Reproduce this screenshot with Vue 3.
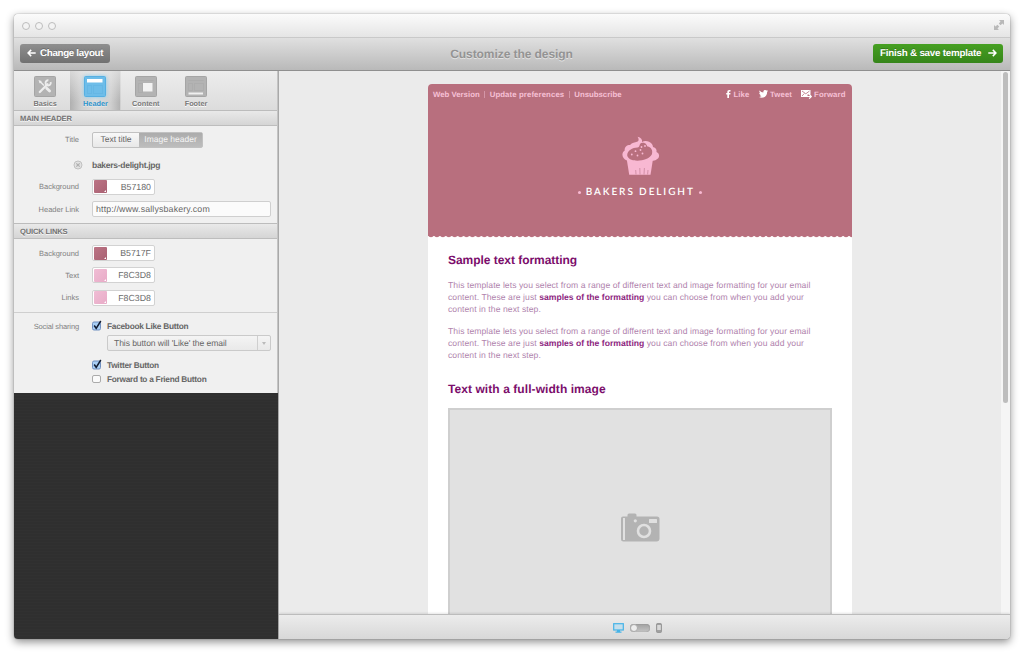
<script setup>
const tabs = [
  { id: 'basics', label: 'Basics' },
  { id: 'header', label: 'Header' },
  { id: 'content', label: 'Content' },
  { id: 'footer', label: 'Footer' },
]
const activeTab = 'header'
const quickLinks = [
  { label: 'Background', value: 'B5717F', tone: 'rose' },
  { label: 'Text', value: 'F8C3D8', tone: 'pink' },
  { label: 'Links', value: 'F8C3D8', tone: 'pink' },
]
const paragraphs = [1, 2]
</script>

<template>
  <div class="window">
    <div class="titlebar">
      <div class="lights"><i></i><i></i><i></i></div>
      <svg class="expand" width="10" height="10" viewBox="0 0 10 10"><path d="M5 0H10V5L8.500 3.500 6.500 5.200 4.800 3.500 6.500 1.500ZM0 5L1.500 6.500 3.400 4.800 5.200 6.600 3.500 8.500 5 10H0Z" fill="#b9b9b9" /></svg>
    </div>

    <div class="toolbar">
      <button class="btn back">
        <svg width="9" height="8" viewBox="0 0 9 8"><path d="M8.700 4H1.500M4.200 .9L1.100 4 4.200 7.100" fill="none" stroke="#fff" stroke-width="1.500" /></svg>
        <span>Change layout</span>
      </button>
      <h1>Customize the design</h1>
      <button class="btn save">
        <span>Finish &amp; save template</span>
        <svg width="9" height="8" viewBox="0 0 9 8"><path d="M.3 4H7.500M4.800 .9L7.900 4 4.800 7.100" fill="none" stroke="#fff" stroke-width="1.500" /></svg>
      </button>
    </div>

    <div class="body">
      <aside class="sidebar">
        <div class="panel">
          <nav class="tabs">
            <div v-for="tab in tabs" :key="tab.id" class="tab" :class="{ active: tab.id === activeTab }">
              <svg width="22" height="21" viewBox="0 0 22 21">
                <rect x=".5" y=".5" width="21" height="20" rx="1" :fill="tab.id === activeTab ? '#6dbde9' : '#b3b3b3'" :stroke="tab.id === activeTab ? '#56b0e3' : '#a5a5a5'" />
                <template v-if="tab.id === 'basics'">
                  <path d="M5.800 16L13.500 8.300" stroke="#ececec" stroke-width="2.300" stroke-linecap="round" />
                  <path d="M16.600 6A2.600 2.600 0 1 1 14.400 4.300" fill="none" stroke="#ececec" stroke-width="1.900" />
                  <path d="M6 5.500L10 9.500" stroke="#ececec" stroke-width="1.500" />
                  <path d="M4.500 4L7.500 5 7 7 5.500 7.200Z" fill="#ececec" />
                  <path d="M12.700 12.200L15.600 15.100" stroke="#ececec" stroke-width="2.800" stroke-linecap="round" />
                </template>
                <template v-else-if="tab.id === 'header'">
                  <path d="M3.500 9.500V17.500H7.500V9.500ZM9.500 9.500V17.500H18.500V9.500Z" fill="none" stroke="#60b3e2" stroke-width=".6" />
                  <rect x="3" y="3" width="15.500" height="3.500" fill="#fff" />
                </template>
                <template v-else-if="tab.id === 'content'">
                  <path d="M3.500 4.500H18.500M3.500 7.500H7.500V16.500H3.500Z" fill="none" stroke="#a9a9a9" stroke-width=".6" />
                  <rect x="8" y="7" width="9.500" height="8.500" fill="#f2f2f2" />
                </template>
                <template v-else>
                  <path d="M3.500 4.500H18.500M3.500 7.500H7.500V14.500H3.500ZM9.500 7.500H18.500V14.500H9.500Z" fill="none" stroke="#a9a9a9" stroke-width=".6" />
                  <rect x="3.500" y="16.500" width="14.500" height="2" fill="#f0f0f0" />
                </template>
              </svg>
              <span>{{ tab.label }}</span>
            </div>
          </nav>

          <h2 class="section">MAIN HEADER</h2>
          <div class="rows main-rows">
            <div class="row">
              <label>Title</label>
              <div class="segmented"><span>Text title</span><span class="on">Image header</span></div>
            </div>
            <div class="row file">
              <label>
                <svg width="10" height="10" viewBox="0 0 10 10"><circle cx="5" cy="5" r="4" fill="#e2e2e2" stroke="#c0c0c0" /><path d="M3.300 3.300L6.700 6.700M6.700 3.300L3.300 6.700" stroke="#b0b0b0" stroke-width="1.200" /></svg>
              </label>
              <b>bakers-delight.jpg</b>
            </div>
            <div class="row">
              <label>Background</label>
              <div class="color"><i class="rose"></i><span>B57180</span></div>
            </div>
            <div class="row">
              <label>Header Link</label>
              <div class="input"><span>http://www.sallysbakery.com</span></div>
            </div>
          </div>

          <h2 class="section second">QUICK LINKS</h2>
          <div class="rows quick-rows">
            <div v-for="item in quickLinks" :key="item.label" class="row">
              <label>{{ item.label }}</label>
              <div class="color"><i :class="item.tone"></i><span>{{ item.value }}</span></div>
            </div>
          </div>

          <div class="social">
            <label>Social sharing</label>
            <div class="options">
              <div class="check">
                <svg width="10" height="11" viewBox="0 0 10 11"><rect x=".5" y="2" width="8" height="8" rx="1.500" fill="#a9cff5" stroke="#6f8fc0" /><path d="M2.200 5.500L4.200 8.300 8.800 1" fill="none" stroke="#111d33" stroke-width="1.500" /></svg>
                <b>Facebook Like Button</b>
              </div>
              <div class="select"><span>This button will 'Like' the email</span><em></em></div>
              <div class="check twitter">
                <svg width="10" height="11" viewBox="0 0 10 11"><rect x=".5" y="2" width="8" height="8" rx="1.500" fill="#a9cff5" stroke="#6f8fc0" /><path d="M2.200 5.500L4.200 8.300 8.800 1" fill="none" stroke="#111d33" stroke-width="1.500" /></svg>
                <b>Twitter Button</b>
              </div>
              <div class="check">
                <svg width="10" height="11" viewBox="0 0 10 11"><rect x=".5" y="2.500" width="8" height="7" rx="1.500" fill="#fafafa" stroke="#ababab" /></svg>
                <b>Forward to a Friend Button</b>
              </div>
            </div>
          </div>
        </div>
      </aside>

      <main class="stage">
        <div class="viewport">
          <article class="email">
            <header class="banner">
              <div class="links">
                <span>Web Version</span><i></i><span class="prefs">Update preferences</span><i></i><span>Unsubscribe</span>
                <div class="share">
                  <svg width="5" height="8" viewBox="0 0 5 8"><path d="M1.300 8V4.400H.2V2.900H1.300V2C1.300.7 2 0 3.300 0H4.500V1.400H3.800C3.200 1.400 3 1.600 3 2.100V2.900H4.500L4.300 4.400H3V8Z" fill="#fff" /></svg>
                  <span>Like</span>
                  <svg class="bird" width="9" height="8" viewBox="0 0 9 8"><path d="M9 1C8.700 1.500 8.400 1.700 8.100 2 8.200 5.600 5.500 7.700 2.900 7.700 1.700 7.700.8 7.400 0 6.900 1 7 2 6.700 2.700 6.100 1.800 6.100 1.200 5.500 1 4.800H1.700C.8 4.500.3 3.800.3 2.900L1.100 3.100C.3 2.500.1 1.500.6.600 1.600 1.800 2.800 2.500 4.400 2.600 4 .8 5.200 0 6.200 0 6.800 0 7.300.2 7.600.6L8.800.2 8.200 1.200Z" fill="#fff" /></svg>
                  <span>Tweet</span>
                  <svg class="mail" width="11" height="9" viewBox="0 0 11 9"><path d="M0 0H9.500V4.500H6.500V7H0Z" fill="#fff" /><path d="M1 1L4.800 3.800 8.500 1M1 6L3.300 3.500" fill="none" stroke="#b86f7e" stroke-width=".8" /><path d="M6 6.500H9.500M8.200 4.200L10.300 6.500 8.200 8.600" fill="none" stroke="#fff" stroke-width="1.200" /></svg>
                  <span>Forward</span>
                </div>
              </div>
              <svg class="cupcake" width="38" height="40" viewBox="0 0 38 40">
                <g fill="#f8b8d2">
                  <path d="M5 24.500C2 23.500 .3 21 .4 18.500C.5 16.500 1.500 15.200 2.700 14.500C2.300 11 4.800 9 8 9C10 6.800 13 6.300 15 5.800C17.200 5 17 3 15.500 .8C19 1.300 20.500 3.600 20 6C22 4.600 25 4.600 27 5.800C29.500 7 31 9 31 11C34 11.800 35 14 34.500 16C38 17.500 38 22 34.500 23.500C33 24.600 31.500 24.800 30.500 24.800L19 29Z" />
                  <path d="M4.700 23H31L28.500 38.700H7.200Z" />
                </g>
                <path d="M5.200 19.500C5 14.500 10.500 11.500 15.500 11.500C18.500 11.500 16.500 7 20.500 6.800C24 6.600 24.500 9 25.500 10.500C29.500 11 31.200 15 29.800 18.500C26.500 25.500 7 27.500 5.200 19.500Z" fill="#b86f7e" />
                <g fill="#f8b8d2"><circle cx="9.800" cy="18.500" r=".9" /><circle cx="13.500" cy="15.200" r=".9" /><circle cx="15.500" cy="19.500" r=".9" /><circle cx="18.500" cy="14" r=".9" /><circle cx="20.500" cy="17.500" r=".9" /><circle cx="23" cy="10" r=".9" /><circle cx="19.500" cy="11" r=".9" /></g>
                <path d="M13.700 34L14 38.500M17.800 32L18 38.500M22.400 32L22 38.500M26 34L25.600 38.500" stroke="#cd8ba2" stroke-width=".9" />
              </svg>
              <div class="brand"><i></i><span>BAKERS DELIGHT</span><i></i></div>
            </header>
            <svg class="scallop" width="424" height="4" viewBox="0 0 424 4">
              <defs><pattern id="scallops" width="5.930" height="4" patternUnits="userSpaceOnUse"><path d="M0 0H5.930V1.200Q5.200 3.300 2.960 3.300Q.7 3.300 0 1.200Z" fill="#b86f7e" /></pattern></defs>
              <rect width="424" height="4" fill="url(#scallops)" />
            </svg>
            <section class="copy">
              <h3>Sample text formatting</h3>
              <p v-for="n in paragraphs" :key="n">
                <span class="line">This template lets you select from a range of different text and image formatting for your email</span>
                <span class="line">content. These are just <b>samples of the formatting</b> you can choose from when you add your</span>
                <span class="line">content in the next step.</span>
              </p>
              <h3 class="second-heading">Text with a full-width image</h3>
              <div class="photo">
                <svg width="40" height="30" viewBox="0 0 40 30">
                  <path d="M1 5.500Q1 3.500 3 3.500H7.500V2Q7.500.500 9 .5H15Q16.500.500 16.500 2V3.500H37Q39.500 3.500 39.500 6V25.500Q39.500 28.500 36.500 28.500H3.500Q1 28.500 1 26Z" fill="#b3b3b3" />
                  <rect x="3" y="5" width="2" height="22" fill="#e0e0e0" />
                  <circle cx="15.300" cy="7.800" r="1.600" fill="#e0e0e0" /><rect x="29" y="6" width="8" height="4" rx=".5" fill="#e0e0e0" />
                  <circle cx="24" cy="18" r="6" fill="#b3b3b3" stroke="#e0e0e0" stroke-width="2.600" />
                </svg>
              </div>
            </section>
          </article>
          <div class="track"><div class="thumb"></div></div>
        </div>
        <footer class="devices">
          <svg width="11" height="10" viewBox="0 0 11 10"><rect x=".7" y=".7" width="9.600" height="6.300" fill="#c5dfec" stroke="#45b3e7" stroke-width="1.200" /><path d="M4 7H7V8.500H8.500V9.700H2.500V8.500H4Z" fill="#45b3e7" /></svg>
          <div class="toggle"><i></i></div>
          <svg width="6" height="10" viewBox="0 0 6 10"><rect x=".6" y=".6" width="4.800" height="8.800" rx=".7" fill="#a2a2a2" stroke="#949494" /><rect x="1.200" y="2" width="3.600" height="5" fill="#d9d9d9" /></svg>
        </footer>
      </main>
    </div>
  </div>
</template>

<style>
html, body { margin: 0; background: #fff; overflow: hidden; }
</style>

<style scoped>
* { box-sizing: border-box; }
svg { flex: none; }
.window { width: 996px; height: 625px; margin: 14px; border-radius: 4px; overflow: hidden; display: flex; flex-direction: column; font-family: "Liberation Sans", Arial, sans-serif; text-rendering: geometricPrecision; background: #ebebeb; box-shadow: 0 0 1px rgba(0,0,0,.65), 0 3px 8px rgba(0,0,0,.45); }
span, b, label, h1, h2, h3 { white-space: nowrap; }
.titlebar { height: 24px; flex: none; display: flex; align-items: center; justify-content: space-between; padding: 1px 6.500px 0 8px; background: linear-gradient(#fbfbfb, #e5e5e5); border-bottom: 1px solid #c9c9c9; }
.lights { display: flex; gap: 5px; }
.lights i { width: 8px; height: 8px; border: 1px solid #bdbdbd; border-radius: 50%; background: #f3f3f3; }
.expand { margin-top: -2px; }
.toolbar { height: 33px; flex: none; display: flex; align-items: center; justify-content: space-between; padding: 0 7px 2px 6px; background: linear-gradient(#e0e0e0, #b9b9b9); border-bottom: 1px solid #8f8f8f; }
.toolbar h1 { margin: 2px -20px 0 20px; font-size: 12px; line-height: 14px; color: #939393; text-shadow: 0 1px #e4e4e4; letter-spacing: -.07px; }
.btn { border: 0; border-radius: 3px; height: 19px; font: bold 9.800px/12px "Liberation Sans", Arial, sans-serif; color: #fff; display: flex; align-items: center; text-shadow: 0 -1px rgba(0,0,0,.25); padding: 0 7px; text-rendering: geometricPrecision; }
.btn span { padding-top: 1px; }
.back { width: 90px; background: linear-gradient(#8f8f8f, #717171); gap: 4px; letter-spacing: -.33px; }
.save { width: 130px; background: linear-gradient(#46a022, #36851a); gap: 7px; letter-spacing: -.22px; }
.body { flex: 1; display: flex; min-height: 0; }
.sidebar { width: 265px; border-right: 1px solid #a9a9a9; background: repeating-linear-gradient(#313131 0 1px, #2f2f2f 1px 3px); }
.panel { background: #f0f0f0; height: 322px; border-right: 1px solid #c4c4c4; }
.tabs { height: 39px; display: flex; padding-left: 6px; background: linear-gradient(#ededed, #dcdcdc); }
.tab { width: 50.300px; display: flex; flex-direction: column; align-items: center; padding-top: 5px; }
.tab span { font-weight: bold; font-size: 7.300px; line-height: 9px; margin-top: 2px; color: #777; text-shadow: 0 1px #fff; }
.tab.active { background: linear-gradient(rgba(236,236,236,.65), rgba(236,236,236,0) 80%), linear-gradient(90deg, #b0b0b0, #cfcfcf 22%, #dedede 50%, #cfcfcf 80%, #b3b3b3 98%, #eee); }
.tab.active svg { filter: drop-shadow(0 0 2px #83caed); }
.tab.active span { color: #2d94cd; text-shadow: 0 1px #e8e8e8; }
.section { margin: 0; height: 16px; font-size: 7.600px; line-height: 15px; padding-left: 6px; color: #727272; background: linear-gradient(#e9e9e9, #d5d5d5); border-top: 1px solid #bcbcbc; border-bottom: 1px solid #bdbdbd; text-shadow: 0 1px #f5f5f5; letter-spacing: -.17px; }
.rows { display: flex; flex-direction: column; }
.row { display: flex; align-items: center; gap: 13px; height: 16px; }
label { width: 65px; flex: none; text-align: right; font-size: 7.500px; line-height: 9px; color: #808080; }
.main-rows { padding-top: 5px; height: 97px; gap: 6.300px; }
.segmented { display: flex; height: 16px; width: 111px; border: 1px solid #c1c1c1; border-radius: 2px; font-size: 8.500px; line-height: 13px; color: #666; background: linear-gradient(#f8f8f8, #e8e8e8); margin-top: 1px; }
.segmented span { width: 46px; text-align: center; }
.segmented .on { flex: 1; background: linear-gradient(#acacac, #bdbdbd); color: #f5f5f5; }
.file { margin-top: 3.400px; }
.file label { display: flex; justify-content: flex-end; padding-left: 4px; width: 69px; }
.file b { margin-left: -4px; }
.row b { font-size: 8.500px; color: #666; letter-spacing: -.28px; }
.color { width: 63px; height: 16px; border: 1px solid #d2d2d2; border-radius: 2px; background: #fff; display: flex; align-items: center; justify-content: space-between; padding: 0 3px 0 1px; font-size: 8.800px; color: #6b6b6b; }
.color i { width: 13px; height: 13px; border-radius: 1px; background: linear-gradient(135deg, #bc7485, #a96172); position: relative; }
.color i::after { content: ""; position: absolute; right: 1px; bottom: 1px; border: 1.500px solid transparent; border-right-color: #fff; border-bottom-color: #fff; }
.color .pink { background: linear-gradient(135deg, #f0bdd4, #e8abc7); }
.input { width: 179px; height: 16px; border: 1px solid #cfcfcf; border-radius: 2px; background: #fbfbfb; font-size: 8.800px; line-height: 15px; padding-left: 3px; color: #666; letter-spacing: .15px; }
.quick-rows { padding-top: 6px; height: 73px; gap: 6.300px; }
.social { border-top: 1px solid #cfcfcf; display: flex; gap: 13px; padding-top: 6px; }
.social > label { margin-top: 3px; letter-spacing: -.13px; }
.check { display: flex; align-items: center; gap: 5px; height: 13px; }
.check b { font-size: 8.300px; color: #666; letter-spacing: -.27px; }
.select { margin: 3px 0 0 15px; width: 164px; height: 16px; border: 1px solid #cacaca; border-radius: 2px; background: linear-gradient(#f4f4f4, #e9e9e9); font-size: 8.600px; line-height: 14px; color: #666; padding-left: 6px; display: flex; justify-content: space-between; letter-spacing: -.09px; }
.select em { width: 13px; border-left: 1px solid #cfcfcf; display: flex; align-items: center; justify-content: center; }
.select em::after { content: ""; border: 2.500px solid transparent; border-top: 3px solid #bbb; border-bottom: 0; }
.twitter { margin-top: 6px; height: 15px; }
.stage { flex: 1; display: flex; flex-direction: column; min-width: 0; }
.viewport { flex: 1; min-height: 0; display: flex; justify-content: space-between; overflow: hidden; padding-left: 149px; }
.email { width: 423.500px; height: 600px; margin-top: 13px; background: #fff; border-radius: 4px 4px 0 0; overflow: hidden; }
.banner { height: 150px; background: #b86f7e; display: flex; flex-direction: column; align-items: center; }
.links { width: 100%; height: 20px; padding: 0 6px 0 5px; display: flex; align-items: center; color: #f6c0d5; font-weight: bold; font-size: 7.800px; }
.links > i { width: 1px; height: 7px; background: #d396a7; margin: 0 4.500px; }
.prefs { letter-spacing: .1px; }
.share { margin-left: auto; display: flex; align-items: center; gap: 2px; letter-spacing: .1px; }
.share .bird { margin-left: 7.500px; }
.share .mail { margin-left: 7px; }
.cupcake { margin: 32px 0 0 2px; }
.brand { display: flex; align-items: center; gap: 5px; margin-top: 9px; font: 600 10px/14px Lato, sans-serif; letter-spacing: 1.900px; color: #fff; }
.brand i { width: 3px; height: 3px; border-radius: 50%; background: #f8b8d2; }
.brand span { margin-right: -1px; }
.scallop { display: block; }
.copy { padding: 13.500px 20px 0; }
h3 { margin: 0; font-size: 12px; line-height: 16px; color: #7b0d6b; letter-spacing: -.04px; }
p { margin: 11px 0 0; font-size: 8.600px; line-height: 12.300px; color: #b083ad; letter-spacing: .065px; }
p + p { margin-top: 9.400px; }
.line { display: block; }
p b { color: #8d2580; letter-spacing: 0; }
.second-heading { margin-top: 19px; letter-spacing: .07px; }
.photo { margin-top: 11.500px; height: 240px; width: 383.500px; border: 2px solid #cfcfcf; background: #e1e1e1; display: flex; justify-content: center; }
.photo svg { margin-top: 103px; }
.track { width: 9px; background: #f5f5f5; padding: 1px 2px; }
.thumb { width: 5px; height: 331px; border-radius: 3px; background: #bdbdbd; }
.devices { height: 25px; flex: none; border-top: 1px solid #bcbcbc; box-shadow: 0 -1px 2px rgba(0,0,0,.1); background: linear-gradient(#ececec, #d8d8d8); display: flex; align-items: center; gap: 6px; padding: 1px 0 0 334px; position: relative; }
.toggle { width: 20px; height: 8px; border-radius: 4px; background: linear-gradient(#a0a0a0, #c4c4c4); box-shadow: inset 0 0 1px #666; }
.toggle i { display: block; width: 8px; height: 8px; border-radius: 50%; background: #ededed; border: 1px solid #aaa; }
</style>
